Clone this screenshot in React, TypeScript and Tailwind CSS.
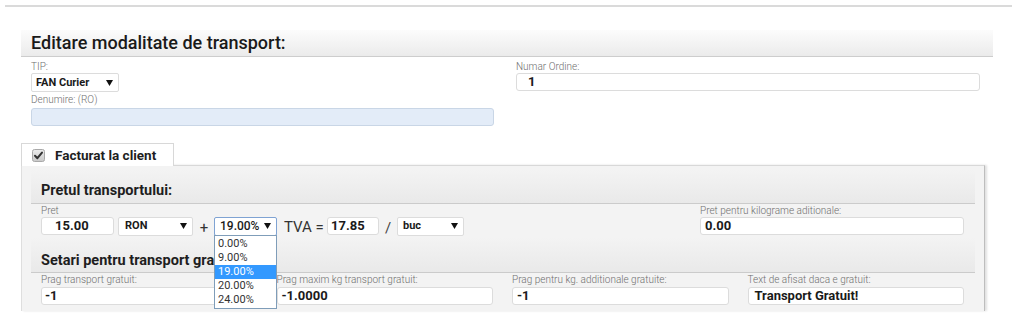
import React from "react";

const Arrow = () => (
  <svg width="7" height="6" viewBox="0 0 7 6" className="shrink-0">
    <polygon points="0,0 7,0 3.5,6" fill="#111" />
  </svg>
);

const Label = ({ children, cls = "" }: { children: React.ReactNode; cls?: string }) => (
  <div className={"text-[10px] leading-[12px] h-[12px] text-[#6f6f6f] font-light whitespace-nowrap " + cls}>{children}</div>
);

const Select = ({
  text,
  w,
  pl = "pl-[5px]",
  focused = false,
  children,
}: {
  text: string;
  w: string;
  pl?: string;
  focused?: boolean;
  children?: React.ReactNode;
}) => (
  <div
    className={
      "relative h-[19px] bg-white rounded-[2px] border flex items-center justify-between pr-[5px] text-[11px] font-bold text-[#1a1a1a] shrink-0 " +
      w +
      " " +
      pl +
      " " +
      (focused ? "border-[#7fa3d3] !font-medium !text-[12px]" : "border-[#dcdcdc]")
    }
  >
    <span className="leading-[14px]">{text}</span>
    <Arrow />
    {children}
  </div>
);

const Input = ({ value, w, pl = "pl-[4px]", bg = "bg-white" }: { value: string; w: string; pl?: string; bg?: string }) => (
  <div
    className={
      "h-[18px] border border-[#dcdcdc] rounded-[3px] flex items-center text-[13px] font-bold text-[#1a1a1a] leading-[16px] shrink-0 " +
      w +
      " " +
      pl +
      " " +
      bg
    }
  >
    {value}
  </div>
);

export default function App() {
  return (
    <div className="w-[1016px] h-[315px] bg-white overflow-hidden font-['Roboto',sans-serif] text-[#222]">
      {/* top line */}
      <div className="pt-[5px] pl-[5px]">
        <div className="h-[2px] w-[1007px] bg-[#dadada]" />
      </div>

      {/* heading */}
      <div className="mt-[23px] ml-[21px] w-[972px] h-[27px] bg-gradient-to-b from-[#fcfcfc] to-[#ebebeb] border-b border-[#cdcdcd] flex items-center pl-[10px]">
        <span className="text-[18px] leading-[22px] font-medium text-[#1a1a1a]">Editare modalitate de transport:</span>
      </div>

      {/* top form */}
      <div className="mt-[4px] ml-[31px] flex gap-x-[22px]">
        <div className="w-[463px] flex flex-col">
          <Label>TIP:</Label>
          <Select text="FAN Curier" w="w-[88px]" pl="pl-[4px]" />
          <Label cls="mt-[2px]">Denumire: (RO)</Label>
          <div className="mt-[2px] h-[18px] w-[463px] bg-[#e3ecf8] border border-[#c9d6e6] rounded-[3px]" />
        </div>
        <div className="w-[464px] flex flex-col">
          <Label>Numar Ordine:</Label>
          <Input value="1" w="w-[464px]" pl="pl-[11px]" />
        </div>
      </div>

      {/* tab */}
      <div className="mt-[17px] ml-[21px] relative z-10 -mb-[1px] w-[153px] h-[23px] bg-white border-t border-l border-r border-[#d8d8d8] flex items-center pl-[10px]">
        <svg width="13" height="13" viewBox="0 0 13 13">
          <defs>
            <linearGradient id="cb" x1="0" y1="0" x2="0" y2="1">
              <stop offset="0" stopColor="#ececec" />
              <stop offset="1" stopColor="#c9c9c9" />
            </linearGradient>
          </defs>
          <rect x="0.5" y="0.5" width="12" height="12" rx="2" fill="url(#cb)" stroke="#a9a9a9" />
          <path d="M3 6.8 L5.4 9.2 L10 3.6" fill="none" stroke="#333" strokeWidth="2" strokeLinecap="round" strokeLinejoin="round" />
        </svg>
        <span className="ml-[10px] text-[13.5px] font-bold text-[#1e1e1e] leading-[16px]">Facturat la client</span>
      </div>

      {/* panel */}
      <div className="ml-[21px] w-[964px] h-[146px] bg-[#f3f3f3] border-t border-l border-r border-t-[#d8d8d8] border-l-[#dedede] border-r-[#bdbdbd] shadow-[2px_0_2px_rgba(0,0,0,0.12)] px-[9px] pt-[4px]">
        {/* header 1 */}
        <div className="h-[34px] bg-gradient-to-b from-[#f3f3f3] to-[#e9e9e9] border-b border-[#cbcbcb] flex items-end pl-[10px] pb-[3px]">
          <span className="text-[14.5px] font-bold leading-[18px] text-[#1e1e1e]">Pretul transportului:</span>
        </div>

        {/* row 1 */}
        <div className="pt-[1px] pl-[10px] pr-[11px] flex items-start">
          <div className="flex flex-col">
            <Label>Pret</Label>
            <div className="flex items-center h-[18px]">
              <Input value="15.00" w="w-[73px]" pl="pl-[13px]" />
              <div className="ml-[4px]">
                <Select text="RON" w="w-[75px]" pl="pl-[6px]" />
              </div>
              <div className="ml-[6px] w-[10px] text-center text-[15px] leading-[18px] text-[#333] mt-[3px]">+</div>
              <div className="ml-[5px]">
                <Select text="19.00%" w="w-[63px]" focused>
                  <div className="absolute left-[-1px] top-[17px] w-[63px] bg-white border border-[#7f9db9] py-[1px] flex flex-col font-normal">
                    {["0.00%", "9.00%", "19.00%", "20.00%", "24.00%"].map((t) => (
                      <div
                        key={t}
                        className={
                          "h-[14px] leading-[14px] text-[11px] pl-[3px] " +
                          (t === "19.00%" ? "bg-[#3399ff] text-white" : "text-[#333]")
                        }
                      >
                        {t}
                      </div>
                    ))}
                  </div>
                </Select>
              </div>
              <div className="ml-[7px] w-[43px] text-[15px] leading-[18px] text-[#333] mt-[2px] whitespace-nowrap">TVA =</div>
              <Input value="17.85" w="w-[52px]" pl="pl-[3px]" />
              <div className="w-[18px] text-center text-[15px] leading-[18px] text-[#444] mt-[3px]">/</div>
              <Select text="buc" w="w-[67px]" pl="pl-[5px]" />
            </div>
          </div>
          <div className="ml-auto w-[264px] flex flex-col">
            <Label>Pret pentru kilograme aditionale:</Label>
            <Input value="0.00" w="w-[264px]" pl="pl-[4px]" />
          </div>
        </div>

        {/* header 2 */}
        <div className="mt-[3px] h-[35px] bg-gradient-to-b from-[#f3f3f3] to-[#e9e9e9] border-b border-[#cbcbcb] flex items-end pl-[10px] pb-[2px]">
          <span className="text-[14.5px] font-bold leading-[18px] text-[#1e1e1e]">Setari pentru transport gratuit:</span>
        </div>

        {/* row 2 */}
        <div className="pl-[10px] pr-[11px] grid grid-cols-4 gap-x-[19px]">
          {[
            ["Prag transport gratuit:", "-1", "pl-[3px]"],
            ["Prag maxim kg transport gratuit:", "-1.0000", "pl-[4px]"],
            ["Prag pentru kg. additionale gratuite:", "-1", "pl-[4px]"],
            ["Text de afisat daca e gratuit:", "Transport Gratuit!", "pl-[6px]"],
          ].map(([l, v, p]) => (
            <div key={l} className="flex flex-col">
              <div className="text-[10px] leading-[13px] h-[13px] text-[#6f6f6f] font-light whitespace-nowrap">{l}</div>
              <div className="mt-[1px]">
                <Input value={v} w="w-full" pl={p} />
              </div>
            </div>
          ))}
        </div>
      </div>
    </div>
  );
}
